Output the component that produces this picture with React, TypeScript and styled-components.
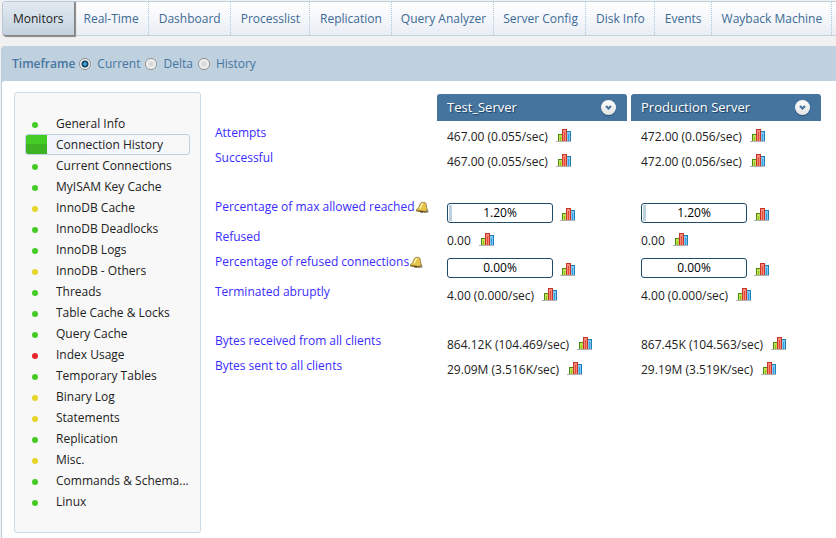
import React from "react";
import styled, { createGlobalStyle } from "styled-components";

const GlobalStyle = createGlobalStyle`
  * { box-sizing: border-box; }
  body {
    margin: 0;
    background: #f1f1f1;
    color: #222;
    font: 12px/18px "Open Sans", "Noto Sans", sans-serif;
  }
  a { text-decoration: none; }
`;

const Page = styled.div`
  padding: 1px 0 0 2px;
  overflow: hidden;
`;

const TabBar = styled.nav`
  display: flex;
  height: 35px;
  border: 1px solid #bfd0df;
  border-right: 0;
  border-radius: 4px 0 0 4px;
  background: linear-gradient(#fff, #e9eef5);
`;

const Tab = styled.a<{ $active?: boolean; $tight?: boolean }>`
  flex: none;
  padding: ${(p) => (p.$tight ? "0 7px 0 9px" : "0 9px 0 10px")};
  line-height: 33px;
  white-space: nowrap;
  color: ${(p) => (p.$active ? "#222" : "#3c6a94")};
  border-right: 1px dotted #a9c8de;
  ${(p) =>
    p.$active &&
    `
    padding: 0 10px;
    background: linear-gradient(#e3eaf1, #c3d2df);
    border-right: 0;
    border-radius: 3px 0 0 3px;
    box-shadow: 1px 1px 1px 1px #858585;
  `}
`;

const Panel = styled.main`
  margin-top: 10px;
  background: #bfd0df;
  border-radius: 4px 0 0 0;
  border-left: 1px solid #bfd0df;
  margin-left: -1px;
`;

const Timeframe = styled.form`
  display: flex;
  align-items: center;
  height: 35px;
  padding-left: 10px;
  color: #4676a0;
`;

const TimeframeTitle = styled.strong`
  margin-right: 4px;
  font-weight: 600;
`;

const Option = styled.label`
  display: flex;
  align-items: center;
  gap: 6px;
  margin-right: 5px;
`;

const Radio = styled.input`
  appearance: none;
  width: 12px;
  height: 12px;
  margin: 0;
  border: 1px solid #8e8f8f;
  border-radius: 50%;
  background: radial-gradient(circle, #d2d2d2 0, #e4e4e4 3px, #fff 5px);
  &:checked {
    background: radial-gradient(circle at 5px 5px, #6cc8f0 0, #1c74a8 2px, #0b2d45 3px, #f4f4f4 4px);
  }
`;

const Body = styled.div`
  display: flex;
  align-items: flex-start;
  min-height: calc(100vh - 81px);
  padding: 11px 15px 5px 12px;
  background: #fff;
  border-radius: 3px 0 0 0;
`;

const Sidebar = styled.nav`
  flex: 0 0 187px;
  padding: 20px 10px;
  background: #f8f8f8;
  border: 1px solid #c9dce9;
  border-radius: 3px;
`;

const MonitorList = styled.ul`
  margin: 0;
  padding: 0;
  list-style: none;
`;

const colors = { green: "#45cb26", yellow: "#e6d52a", red: "#e8242c" };
type Status = keyof typeof colors;

const MonitorLink = styled.a<{ $active?: boolean }>`
  display: flex;
  align-items: center;
  height: 21px;
  color: #222;
  white-space: nowrap;
  border: 1px solid ${(p) => (p.$active ? "#bfd0df" : "transparent")};
  border-radius: 3px;
  overflow: hidden;
  background: ${(p) => (p.$active ? "linear-gradient(90deg, #eff4fb, #f8f8f8)" : "none")};
`;

const StatusCell = styled.span<{ $active?: boolean }>`
  flex: 0 0 21px;
  display: flex;
  align-items: center;
  justify-content: center;
  height: 21px;
  padding: 2px 3px 0 0;
  margin-right: 9px;
  background: ${(p) => (p.$active ? "linear-gradient(#45cb26 50%, #3db324 50%)" : "none")};
`;

const Dot = styled.span<{ $status: Status }>`
  width: 6px;
  height: 6px;
  border-radius: 50%;
  background: ${(p) => colors[p.$status]};
`;

const Metrics = styled.table`
  flex: 1;
  min-width: 0;
  margin: 2px 0 0 14px;
  table-layout: fixed;
  border-collapse: collapse;
  td, th { padding: 0; text-align: left; vertical-align: top; font-weight: normal; }
  thead th:not(:last-child) { padding-right: 4px; }
`;

const LabelCol = styled.col` width: 222px; `;
const FirstServerCol = styled.col` width: 194px; `;

const ServerHead = styled.div`
  display: flex;
  align-items: center;
  justify-content: space-between;
  height: 27px;
  padding: 0 11px 0 10px;
  background: #45749e;
  border-radius: 3px 3px 0 0;
  color: #fff;
  font-size: 13px;
  line-height: 17px;
  text-shadow: 1px 1px 1px #1d3e5c;
`;

const MenuButton = styled.button`
  width: 15px;
  height: 15px;
  padding: 0;
  border: 0;
  border-radius: 50%;
  background: linear-gradient(#fff, #e2e2e2);
  box-shadow: 0 1px 1px #2c5274;
  svg { display: block; }
`;

const MetricRow = styled.tr<{ $kind: "text" | "bar" | "gap" }>`
  height: ${(p) => ({ text: 25, bar: 30, gap: 24 })[p.$kind]}px;
`;

const MetricName = styled.div`
  display: flex;
  align-items: center;
  padding-top: 3px;
  a { color: #3a2bff; }
`;

const Value = styled.div<{ $bar?: boolean }>`
  display: flex;
  align-items: center;
  gap: ${(p) => (p.$bar ? 7 : 8)}px;
  padding: ${(p) => (p.$bar ? 8 : 7)}px 0 0 10px;
  white-space: nowrap;
`;

const Meter = styled.div`
  position: relative;
  width: 106px;
  height: 20px;
  padding: 1px;
  border: 1px solid #1f4b6b;
  border-radius: 3px;
  background: #fff;
  color: #000;
`;

const MeterFill = styled.div`
  height: 100%;
  background: #bfd0df;
`;

const MeterText = styled.span`
  position: absolute;
  inset: 0;
  text-align: center;
`;

const ChartButton = styled.button<{ $low?: boolean }>`
  padding: ${(p) => (p.$low ? "3px 0 0" : "0 0 3px")};
  border: 0;
  background: none;
  svg { display: block; }
`;

const ChartIcon = () => (
  <svg width="15" height="13" shapeRendering="crispEdges" aria-hidden="true">
    <path d="M0 12h15v1H0z" fill="#b0b0b0" />
    <path d="M2 5h5v7H2z" fill="#4c8a10" />
    <path d="M3 6h3v6H3z" fill="#c6df58" />
    <path d="M4 8h1v4H4z" fill="#8fc31b" />
    <path d="M10 2h5v10h-5z" fill="#1c7fb8" />
    <path d="M11 3h3v9h-3z" fill="#83c8f5" />
    <path d="M12 5h1v7h-1z" fill="#349fe5" />
    <path d="M6 0h5v12H6z" fill="#c53429" />
    <path d="M7 1h3v11H7z" fill="#f68b7c" />
    <path d="M8 3h1v9H8z" fill="#e84b35" />
  </svg>
);

const BellIcon = () => (
  <svg width="14" height="13" viewBox="0 0 14 13" role="img" aria-label="Alert">
    <path d="M9 11l3-2.500 1.500 1.500v1.500l-4 .5z" fill="#8d8982" />
    <path d="M1.500 8.500C3.500 7.500 4 6 4.500 4.200 5.200 2 6.500 1.300 8.500 1.300c1.700 0 2.700.8 2.800 2.400.1 2.300.5 3.500 1.200 5L10 11 1.500 9.800z" fill="#e3c34c" stroke="#7d6328" strokeWidth=".7" />
    <path d="M5 7.500C6 6 6 3.500 8 2.400" fill="none" stroke="#fff2a8" strokeWidth="1.400" />
    <path d="M1.300 9l8.700 1 2.500-1.300-2 2.500-2 .4-7-1.300z" fill="#8b6c26" />
    <path d="M4.500 10.200h3.500v1.300H5.500z" fill="#3f331c" />
  </svg>
);

const ArrowIcon = () => (
  <svg width="15" height="15" aria-hidden="true">
    <path d="M5 6l2.500 2.500L10 6" fill="none" stroke="#45749e" strokeWidth="2.200" />
  </svg>
);

const tabs = ["Monitors", "Real-Time", "Dashboard", "Processlist", "Replication", "Query Analyzer", "Server Config", "Disk Info", "Events", "Wayback Machine"];
const tightTabs = ["Query Analyzer", "Server Config"];

const monitors: [string, Status][] = [
  ["General Info", "green"],
  ["Connection History", "green"],
  ["Current Connections", "green"],
  ["MyISAM Key Cache", "green"],
  ["InnoDB Cache", "yellow"],
  ["InnoDB Deadlocks", "green"],
  ["InnoDB Logs", "green"],
  ["InnoDB - Others", "yellow"],
  ["Threads", "green"],
  ["Table Cache & Locks", "green"],
  ["Query Cache", "green"],
  ["Index Usage", "red"],
  ["Temporary Tables", "green"],
  ["Binary Log", "yellow"],
  ["Statements", "yellow"],
  ["Replication", "green"],
  ["Misc.", "yellow"],
  ["Commands & Schema...", "green"],
  ["Linux", "green"],
];

const servers = ["Test_Server", "Production Server"];

type Metric = { name: string; values: string[]; bar?: boolean } | null;
const metrics: Metric[] = [
  { name: "Attempts", values: ["467.00 (0.055/sec)", "472.00 (0.056/sec)"] },
  { name: "Successful", values: ["467.00 (0.055/sec)", "472.00 (0.056/sec)"] },
  null,
  { name: "Percentage of max allowed reached", values: ["1.20%", "1.20%"], bar: true },
  { name: "Refused", values: ["0.00", "0.00"] },
  { name: "Percentage of refused connections", values: ["0.00%", "0.00%"], bar: true },
  { name: "Terminated abruptly", values: ["4.00 (0.000/sec)", "4.00 (0.000/sec)"] },
  null,
  { name: "Bytes received from all clients", values: ["864.12K (104.469/sec)", "867.45K (104.563/sec)"] },
  { name: "Bytes sent to all clients", values: ["29.09M (3.516K/sec)", "29.19M (3.519K/sec)"] },
];

export default function App() {
  return (
    <Page>
      <GlobalStyle />
      <TabBar>
        {tabs.map((t, i) => (
          <Tab key={t} href="#" $active={i === 0} $tight={tightTabs.includes(t)}>{t}</Tab>
        ))}
      </TabBar>
      <Panel>
        <Timeframe>
          <TimeframeTitle>Timeframe</TimeframeTitle>
          {["Current", "Delta", "History"].map((o, i) => (
            <Option key={o}>
              <Radio type="radio" name="timeframe" defaultChecked={i === 0} />
              {o}
            </Option>
          ))}
        </Timeframe>
        <Body>
          <Sidebar>
            <MonitorList>
              {monitors.map(([name, status], i) => (
                <li key={name}>
                  <MonitorLink href="#" $active={i === 1}>
                    <StatusCell $active={i === 1}>{i !== 1 && <Dot $status={status} />}</StatusCell>
                    {name}
                  </MonitorLink>
                </li>
              ))}
            </MonitorList>
          </Sidebar>
          <Metrics>
            <colgroup>
              <LabelCol />
              <FirstServerCol />
              <col />
            </colgroup>
            <thead>
              <tr>
                <td />
                {servers.map((s) => (
                  <th key={s} scope="col">
                    <ServerHead>
                      {s}
                      <MenuButton type="button" aria-label={`${s} menu`}><ArrowIcon /></MenuButton>
                    </ServerHead>
                  </th>
                ))}
              </tr>
            </thead>
            <tbody>
              {metrics.map((m, i) =>
                m === null ? (
                  <MetricRow key={i} $kind="gap"><td colSpan={3} /></MetricRow>
                ) : (
                  <MetricRow key={i} $kind={m.bar ? "bar" : "text"}>
                    <th scope="row">
                      <MetricName><a href="#">{m.name}</a>{m.bar && <BellIcon />}</MetricName>
                    </th>
                    {m.values.map((v, j) => (
                      <td key={j}>
                        <Value $bar={m.bar}>
                          {m.bar ? (
                            <Meter role="meter" aria-label={m.name} aria-valuenow={parseFloat(v)}>
                              <MeterFill style={{ width: `${parseFloat(v) * 2.5}%` }} />
                              <MeterText>{v}</MeterText>
                            </Meter>
                          ) : v}
                          <ChartButton type="button" $low={m.bar} aria-label={`${m.name} chart`}><ChartIcon /></ChartButton>
                        </Value>
                      </td>
                    ))}
                  </MetricRow>
                )
              )}
            </tbody>
          </Metrics>
        </Body>
      </Panel>
    </Page>
  );
}
